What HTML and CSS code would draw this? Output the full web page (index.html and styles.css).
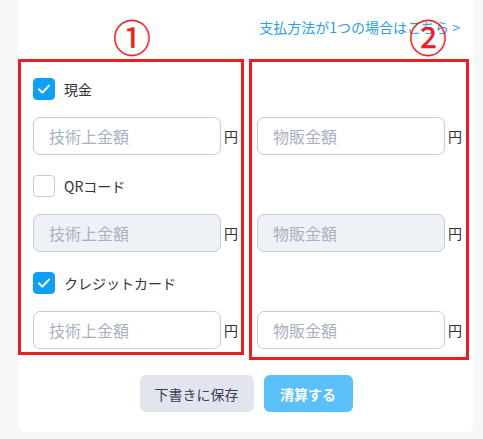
FILE: index.html
```html
<!DOCTYPE html>
<html lang="ja">
<head>
<meta charset="utf-8">
<link rel="stylesheet" href="styles.css">
</head>
<body>
<div class="card">
  <div class="top">
    <a class="link">支払方法が1つの場合はこちら &gt;</a>
  </div>
  <div class="cols">
    <div class="box box-left">
      <span class="mark mark-1">①</span>
      <div class="group">
        <label class="check-row"><span class="cb checked"><svg viewBox="0 0 22 22" width="22" height="22"><path d="M6 11.2l3.4 3.4 6.6-7" fill="none" stroke="#fff" stroke-width="2" stroke-linecap="round" stroke-linejoin="round"/></svg></span><span class="lbl">現金</span></label>
        <div class="field"><div class="input">技術上金額</div><span class="yen">円</span></div>
      </div>
      <div class="group">
        <label class="check-row"><span class="cb"></span><span class="lbl">QRコード</span></label>
        <div class="field"><div class="input disabled">技術上金額</div><span class="yen">円</span></div>
      </div>
      <div class="group">
        <label class="check-row"><span class="cb checked"><svg viewBox="0 0 22 22" width="22" height="22"><path d="M6 11.2l3.4 3.4 6.6-7" fill="none" stroke="#fff" stroke-width="2" stroke-linecap="round" stroke-linejoin="round"/></svg></span><span class="lbl">クレジットカード</span></label>
        <div class="field"><div class="input">技術上金額</div><span class="yen">円</span></div>
      </div>
    </div>
    <div class="box box-right">
      <span class="mark mark-2">②</span>
      <div class="group">
        <div class="check-row"></div>
        <div class="field"><div class="input">物販金額</div><span class="yen">円</span></div>
      </div>
      <div class="group">
        <div class="check-row"></div>
        <div class="field"><div class="input disabled">物販金額</div><span class="yen">円</span></div>
      </div>
      <div class="group">
        <div class="check-row"></div>
        <div class="field"><div class="input">物販金額</div><span class="yen">円</span></div>
      </div>
    </div>
  </div>
  <div class="actions">
    <button class="btn btn-draft">下書きに保存</button>
    <button class="btn btn-primary">清算する</button>
  </div>
</div>
</body>
</html>
```
FILE: styles.css
```css
* { box-sizing: border-box; }
html, body { margin: 0; padding: 0; }
body {
  background: #f7f7f9;
  font-family: "Noto Sans CJK JP", "Noto Sans", sans-serif;
  width: 483px;
  height: 439px;
  overflow: hidden;
}
.card {
  margin-left: 18px;
  width: 456px;
  height: 432px;
  background: #fff;
  border-radius: 0 0 8px 8px;
  position: relative;
  padding-top: 16px;
}
.top {
  display: flex;
  justify-content: flex-end;
  padding-right: 14px;
  height: 43px;
}
.link {
  font-size: 14px;
  line-height: 22px;
  color: #2aa0e6;
}
.cols {
  display: flex;
  gap: 5px;
  align-items: flex-start;
}
.box {
  border: 3px solid #ee1c25;
  position: relative;
  padding-top: 16px;
}
.box-left {
  width: 226px;
  padding-left: 12px;
  padding-bottom: 3px;
}
.box-right {
  width: 220px;
  padding-left: 5px;
  padding-bottom: 8px;
}
.mark {
  position: absolute;
  top: -46px;
  font-size: 38px;
  line-height: 40px;
  color: #ee1c25;
  font-weight: normal;
  -webkit-text-stroke: 0.3px #ee1c25;
  font-family: "Noto Sans CJK JP", sans-serif;
}
.mark-1 { left: 92px; }
.mark-2 { left: 157px; }
.group { margin-bottom: 20px; }
.group:last-child { margin-bottom: 0; }
.check-row {
  display: flex;
  align-items: center;
  height: 22px;
  margin-bottom: 17px;
}
.cb {
  width: 22px;
  height: 22px;
  border-radius: 4px;
  border: 1px solid #c9cbd9;
  background: #fff;
  display: flex;
}
.cb.checked {
  background: #0fa0f6;
  border-color: #0fa0f6;
}
.cb svg { margin: -1px; }
.lbl {
  margin-left: 9px;
  font-size: 14px;
  color: #333;
}
.field {
  display: flex;
  align-items: center;
}
.input {
  width: 188px;
  height: 38px;
  border: 1px solid #c9cbdb;
  border-radius: 7px;
  padding-left: 15px;
  font-size: 16px;
  line-height: 36px;
  color: #aab0c4;
  background: #fff;
}
.input.disabled { background: #eef1f5; }
.yen {
  margin-left: 3px;
  font-size: 14px;
  color: #333;
}
.actions {
  display: flex;
  justify-content: center;
  gap: 10px;
  margin-top: 15px;
}
.btn {
  height: 37px;
  border: none;
  border-radius: 6px;
  font-family: "Noto Sans CJK JP", sans-serif;
  font-size: 14px;
}
.btn-draft {
  width: 114px;
  background: #e2e5ee;
  color: #3d3d52;
}
.btn-primary {
  width: 89px;
  background: #5bc0f8;
  color: #fff;
  font-weight: bold;
}
```
